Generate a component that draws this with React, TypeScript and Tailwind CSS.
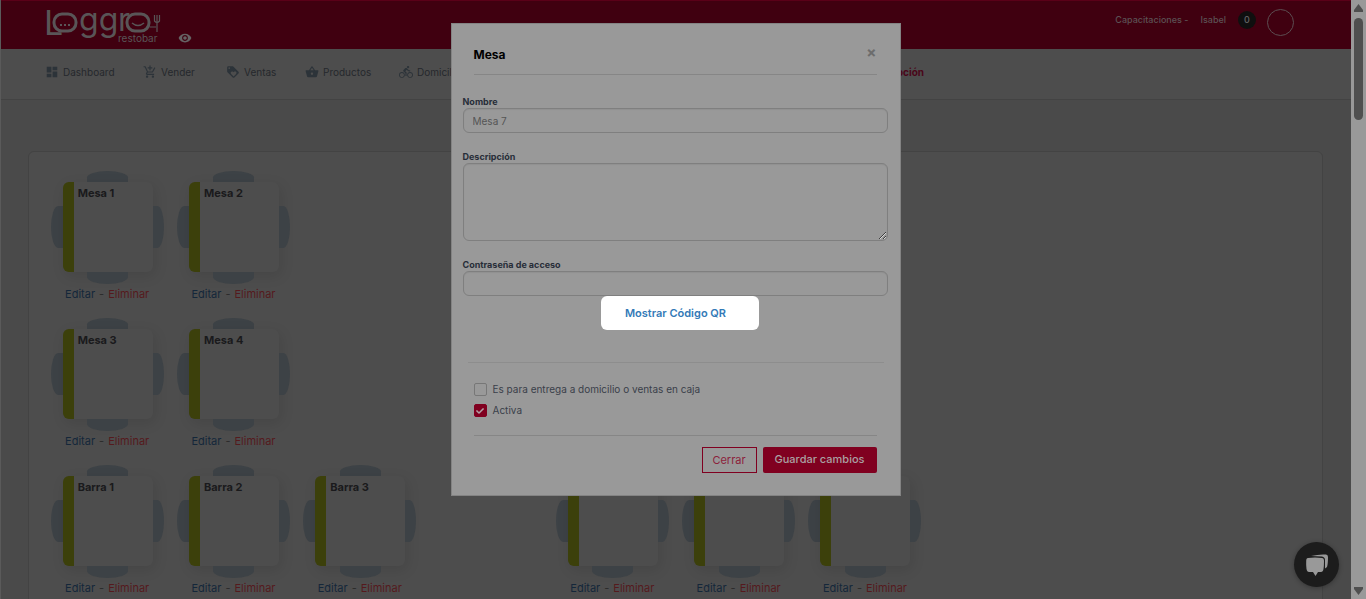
import { useState } from 'react';
import {
  MdAddShoppingCart,
  MdDashboard,
  MdDirectionsBike,
  MdLoyalty,
  MdShoppingBasket,
  MdVisibility,
} from 'react-icons/md';
import { FaCheck } from 'react-icons/fa';

interface Table {
  id: number;
  name: string;
  column: string;
}

const rows: Table[][] = [
  [
    { id: 1, name: 'Mesa 1', column: 'col-start-1' },
    { id: 2, name: 'Mesa 2', column: 'col-start-2' },
  ],
  [
    { id: 3, name: 'Mesa 3', column: 'col-start-1' },
    { id: 4, name: 'Mesa 4', column: 'col-start-2' },
  ],
  [
    { id: 5, name: 'Barra 1', column: 'col-start-1' },
    { id: 6, name: 'Barra 2', column: 'col-start-2' },
    { id: 7, name: 'Barra 3', column: 'col-start-3' },
    { id: 8, name: 'Mesa 5', column: 'col-start-5' },
    { id: 9, name: 'Mesa 6', column: 'col-start-6' },
    { id: 10, name: 'Mesa 7', column: 'col-start-7' },
  ],
];

const navItems = [
  { label: 'Dashboard', icon: MdDashboard, width: 'w-[98px]' },
  { label: 'Vender', icon: MdAddShoppingCart, width: 'w-[83px]' },
  { label: 'Ventas', icon: MdLoyalty, width: 'w-[79px]' },
  { label: 'Productos', icon: MdShoppingBasket, width: 'w-[94px]' },
  { label: 'Domicilios', icon: MdDirectionsBike, width: 'w-[98px]' },
];

function Logo() {
  return (
    <svg width="118" height="48" viewBox="0 0 118 48" fill="none" stroke="#595557" strokeWidth="2" aria-label="Loggro restobar">
      <g fill="#595557" stroke="none" fontFamily="Inter, sans-serif">
        <text x="0" y="34" fontSize="34" fontWeight="400">L</text>
        <text x="35" y="30" fontSize="32" fontWeight="400">gg</text>
        <text x="74" y="30" fontSize="32" fontWeight="400">r</text>
        <text x="74" y="41" fontSize="10" fontWeight="400">restobar</text>
      </g>
      <rect x="10" y="13" width="22" height="17" rx="8" strokeWidth="3" />
      <path d="M16 24h2M20 24h2M24 24h2" />
      <rect x="83" y="13" width="22" height="17" rx="8" strokeWidth="3" />
      <path d="M88 22q6 5 12 0" strokeWidth="1.500" />
      <path d="M106 26h6M113 14v17M110.500 14v6q2.500 3 5 0v-6" strokeWidth="1.200" />
    </svg>
  );
}

function TopBar() {
  return (
    <header className="flex h-[49px] items-start justify-between border-t border-[#5a0018] bg-[#400010] pl-[43px] pr-[57px]">
      <div className="flex items-end gap-4">
        <a href="#inicio"><Logo /></a>
        <button type="button" aria-label="Ver" className="pb-1 text-[#666264]">
          <MdVisibility size={14} />
        </button>
      </div>
      <div className="flex items-center text-[9px] font-medium text-[#5c5154]">
        <span className="mr-3 pb-1.5">Capacitaciones -</span>
        <span className="mr-3 pb-1.5">Isabel</span>
        <span className="mb-1.5 flex size-[18px] items-center justify-center rounded-full bg-[#0f0f0f] text-[#666666]">0</span>
        <button type="button" aria-label="Perfil" className="my-2 ml-[11px] size-[27px] rounded-full border border-[#5c4d51]" />
      </div>
    </header>
  );
}

function NavBar() {
  return (
    <nav className="flex h-[51px] items-center border-b border-[#434343] bg-[#4d4d4d] pb-1 pl-11 text-[10px] text-[#25282c]">
      {navItems.map(({ label, icon: Icon, width }) => (
        <a key={label} href={`#${label.toLowerCase()}`} className={`${width} flex shrink-0 items-center gap-1`}>
          <Icon size={14} className="text-[#2c3339]" />
          {label}
        </a>
      ))}
      <a href="#recepcion" className="w-[427px] shrink-0 text-right font-bold text-[#4a0619]">
        Recepción
      </a>
    </nav>
  );
}

function TableCard({ table }: { table: Table }) {
  return (
    <div className={`${table.column} flex flex-col items-center`}>
      <div className="grid grid-cols-[12px_90px_11px] grid-rows-[11px_90px_12px] items-center justify-items-center">
        <div className="col-start-2 h-full w-[41px] rounded-[50%_50%_0_0/60%_60%_0_0] bg-[#3d4246]" />
        <div className="col-start-1 row-start-2 h-[42px] w-full rounded-[60%_0_0_60%/50%_0_0_50%] bg-[#3d4246]" />
        <div className="col-start-2 row-start-2 flex size-full overflow-hidden rounded-md border-l-[11px] border-[#3c400b] bg-[#4d4d4d] pl-1 pt-[3px] text-[11px] font-bold text-[#1a1a1c] shadow-[2px_4px_14px_rgba(0,0,0,0.1)]">
          {table.name}
        </div>
        <div className="col-start-3 row-start-2 h-[42px] w-full rounded-[0_60%_60%_0/0_50%_50%_0] bg-[#3d4246]" />
        <div className="col-start-2 row-start-3 h-full w-[41px] rounded-[0_0_50%_50%/0_0_60%_60%] bg-[#3d4246]" />
      </div>
      <div className="flex h-5 items-center gap-1 text-[11px] text-[#2b2b2b]">
        <a href={`#editar-${table.id}`} className="text-[#14273a]">Editar</a>
        -
        <a href={`#eliminar-${table.id}`} className="text-[#551a1d]">Eliminar</a>
      </div>
    </div>
  );
}

function TableModal() {
  const [name, setName] = useState('Mesa 7');
  const [delivery, setDelivery] = useState(false);
  const [active, setActive] = useState(true);

  const field = 'block w-full rounded-md border border-[#7f7f7f] bg-[#999999] px-[9px] text-[10px] text-[#555555] shadow-[inset_0_1px_1px_rgba(0,0,0,0.06)] outline-none';
  const fieldLabel = 'block h-[13px] text-[9px] font-bold leading-[13px] text-[#272d38]';
  const box = 'col-start-1 row-start-1 size-[13px] appearance-none rounded-xs border border-[#777777] checked:border-[#800020] checked:bg-[#800020]';

  return (
    <div role="dialog" aria-labelledby="modal-title" className="w-[450px] border border-[#838383] bg-[#999999] pb-[22px]">
      <div className="ml-[22px] mr-[23px] flex h-[51px] justify-between border-b border-[#868686] pt-[21px]">
        <h2 id="modal-title" className="text-xs font-bold leading-5 text-black">Mesa</h2>
        <button type="button" aria-label="Cerrar ventana" className="h-4 text-[15px] font-bold leading-4 text-[#6c6c6c]">×</button>
      </div>

      <form>
        <div className="flex flex-col gap-[17px] pl-[11px] pr-3 pt-5">
          <div>
            <label htmlFor="nombre" className={fieldLabel}>Nombre</label>
            <input id="nombre" value={name} onChange={e => setName(e.target.value)} className={`${field} h-[25px]`} />
          </div>
          <div>
            <label htmlFor="descripcion" className={fieldLabel}>Descripción</label>
            <textarea id="descripcion" className={`${field} h-[78px] resize`} />
          </div>
          <div>
            <label htmlFor="clave" className={fieldLabel}>Contraseña de acceso</label>
            <input id="clave" type="password" className={`${field} h-[25px]`} />
          </div>
        </div>

        <button type="button" className="ml-[149px] block h-[34px] w-[158px] rounded-md bg-white pr-2 text-[11px] font-semibold text-[#337ab7]">
          Mostrar Código QR
        </button>

        <div className="mx-4 mt-8 flex flex-col gap-2 border-t border-[#8d8d8d] px-1.5 pt-5 text-[10px] leading-[13px] text-[#3a404a]">
          <label className="flex items-center gap-1.5">
            <input type="checkbox" checked={delivery} onChange={e => setDelivery(e.target.checked)} className={box} />
            Es para entrega a domicilio o ventas en caja
          </label>
          <label className="flex items-center gap-1.5">
            <span className="grid place-items-center">
              <input type="checkbox" checked={active} onChange={e => setActive(e.target.checked)} className={box} />
              {active && <FaCheck size={8} className="pointer-events-none z-10 col-start-1 row-start-1 text-[#b3a0a5]" />}
            </span>
            Activa
          </label>
        </div>

        <div className="ml-[22px] mr-[23px] mt-[18px] flex justify-end gap-1.5 border-t border-[#868686] pt-[11px] text-[11px]">
          <button type="button" className="h-[26px] w-[55px] border border-[#800020] text-[#8c1f3c]">Cerrar</button>
          <button type="submit" className="h-[26px] w-[114px] rounded-xs bg-[#800020] pb-0.5 font-medium text-[#aaa0a3]">Guardar cambios</button>
        </div>
      </form>
    </div>
  );
}

function ScrollTrack() {
  return (
    <div className="flex w-[15px] shrink-0 flex-col items-center justify-between bg-[#999999] py-1">
      <div className="flex flex-col items-center gap-1.5">
        <svg width="9" height="8" viewBox="0 0 9 8" fill="#4f4f4f"><path d="M4.500 0 9 6v2H0V6z" /></svg>
        <div className="h-[102px] w-[9px] rounded-full bg-[#4f4f4f]" />
      </div>
      <svg width="9" height="8" viewBox="0 0 9 8" fill="#4f4f4f"><path d="M4.500 8 9 2V0H0v2z" /></svg>
    </div>
  );
}

export default function App() {
  return (
    <div className="relative flex h-screen overflow-hidden bg-[#4a4a4a] font-[Inter,'Noto_Sans',sans-serif]">
      <div className="min-w-0 flex-1 overflow-hidden border-l border-[#5a5a5a]">
        <TopBar />
        <NavBar />
        <main className="ml-[27px] mr-7 mt-[51px] flex min-h-screen flex-col gap-[14px] rounded-md border border-[#434343] bg-[#4d4d4d] px-[15px] pt-[19px]">
          {rows.map((tables, index) => (
            <div key={index} className="grid grid-cols-10">
              {tables.map(table => (
                <TableCard key={table.id} table={table} />
              ))}
            </div>
          ))}
        </main>
      </div>
      <ScrollTrack />

      <div className="absolute inset-y-0 left-0 right-[15px] flex items-start justify-center pt-[23px]">
        <TableModal />
      </div>

      <button type="button" aria-label="Chat" className="absolute bottom-3 right-[27px] flex size-[45px] items-center justify-center rounded-full bg-[#1c1c1c] shadow-[0_1px_5px_rgba(0,0,0,0.3)]">
        <svg width="24" height="24" viewBox="0 0 24 24" fill="#999999">
          <path d="M6 3q8-2 15-1.500 2 0 2 2.500 0 7-1 10l-2 1.500V7q0-3-3-3.500Q11 3 6 3z" />
          <path d="M3 5q7-1 14 0 2 0 2 3 0 5-.500 8-.500 3-2.500 3h-3l-2.500 4L8 19H4q-2 0-2.500-3Q1 11 1.200 8 1.200 5 3 5z" />
        </svg>
      </button>
    </div>
  );
}
